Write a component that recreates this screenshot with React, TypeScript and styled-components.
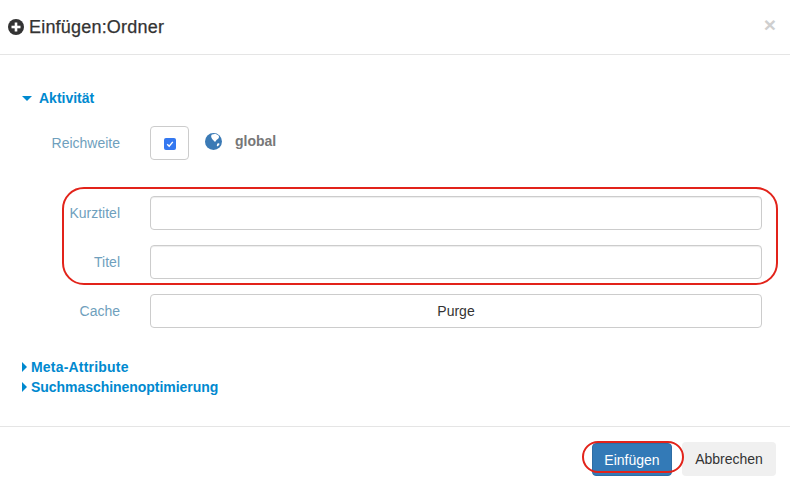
import React from "react";
import styled, { createGlobalStyle } from "styled-components";

const Global = createGlobalStyle`
  html, body { margin: 0; padding: 0; background: #fff; }
  body { font-family: "Liberation Sans", Arial, sans-serif; font-size: 14px; color: #333; overflow: hidden; }
`;

const Modal = styled.div`
  position: relative;
  width: 790px;
  height: 487px;
  background: #fff;
  display: flex;
  flex-direction: column;
  overflow: hidden;
`;

const Header = styled.header`
  height: 54px;
  flex: none;
  border-bottom: 1px solid #e5e5e5;
  display: flex;
  align-items: center;
  padding: 0 14px 0 8px;
`;

const HeaderIcon = styled.svg`
  width: 16px;
  height: 16px;
  margin-right: 5px;
  flex: none;
`;

const Title = styled.h4`
  margin: 0;
  flex: 1;
  font-size: 18px;
  font-weight: 400;
  line-height: 20px;
  letter-spacing: 0.2px;
  color: #333;
  -webkit-text-stroke: 0.25px #333;
`;

const Close = styled.span`
  font-size: 21px;
  font-weight: 700;
  line-height: 1;
  color: #cfcfcf;
  margin-top: -6px;
`;

const Body = styled.div`
  flex: 1;
  padding: 34px 28px 0 22px;
  display: flex;
  flex-direction: column;
`;

const Section = styled.div<{ $gap?: number; $spacing?: number }>`
  display: flex;
  align-items: center;
  height: 18px;
  color: #0089cf;
  font-size: 14px;
  font-weight: 700;
  letter-spacing: ${(p) => p.$spacing ?? 0}px;
  margin-top: ${(p) => p.$gap ?? 0}px;
`;

const Caret = styled.span<{ $open?: boolean }>`
  width: 0;
  height: 0;
  flex: none;
  ${(p) =>
    p.$open
      ? `border-left: 5px solid transparent; border-right: 5px solid transparent; border-top: 5px solid #0089cf; margin-right: 7px;`
      : `border-top: 5px solid transparent; border-bottom: 5px solid transparent; border-left: 5px solid #0089cf; margin-right: 4px;`}
`;

const Row = styled.div<{ $top?: number }>`
  display: grid;
  grid-template-columns: 98px 612px;
  column-gap: 30px;
  align-items: center;
  margin-top: ${(p) => p.$top ?? 15}px;
  height: 34px;
`;

const Label = styled.label`
  text-align: right;
  font-size: 14px;
  color: #6f9fbd;
`;

const ScopeCell = styled.div`
  display: flex;
  align-items: flex-start;
  height: 34px;
`;

const CheckFrame = styled.div`
  width: 37px;
  height: 32px;
  border: 1px solid #ccc;
  border-radius: 4px;
  display: flex;
  align-items: center;
  justify-content: center;
  flex: none;
`;

const CheckBox = styled.span`
  width: 12px;
  height: 12px;
  border-radius: 2px;
  background: #3478f0;
  display: flex;
  align-items: center;
  justify-content: center;
  margin-top: 2px;
`;

const Globe = styled.svg`
  width: 17px;
  height: 17px;
  margin: 7px 0 0 16px;
  flex: none;
`;

const ScopeText = styled.span`
  font-size: 14px;
  font-weight: 700;
  color: #777;
  margin: 5px 0 0 13px;
  line-height: 20px;
`;

const Input = styled.input`
  box-sizing: border-box;
  width: 612px;
  height: 34px;
  border: 1px solid #ccc;
  border-radius: 4px;
  background: #fff;
  box-shadow: inset 0 1px 1px rgba(0, 0, 0, 0.075);
  padding: 6px 12px;
  outline: none;
`;

const Purge = styled.button`
  box-sizing: border-box;
  width: 612px;
  height: 34px;
  border: 1px solid #ccc;
  border-radius: 4px;
  background: #fff;
  color: #333;
  font: 400 14px "Liberation Sans", Arial, sans-serif;
`;

const Footer = styled.footer`
  height: 61px;
  flex: none;
  box-sizing: border-box;
  border-top: 1px solid #e5e5e5;
  display: flex;
  justify-content: flex-end;
  align-items: flex-start;
  padding: 15px 14px 0 0;
  gap: 10px;
`;

const Primary = styled.button`
  box-sizing: border-box;
  width: 80px;
  height: 33px;
  margin-top: 1px;
  border: 1px solid #2e6da4;
  border-radius: 4px;
  background: #337ab7;
  color: #fff;
  font: 400 14px "Liberation Sans", Arial, sans-serif;
`;

const Secondary = styled.button`
  box-sizing: border-box;
  width: 94px;
  height: 34px;
  border: 0;
  border-radius: 4px;
  background: #f0f0f0;
  color: #333;
  font: 400 14px "Liberation Sans", Arial, sans-serif;
`;

const FieldsMark = styled.div`
  position: absolute;
  left: 62px;
  top: 187px;
  width: 716px;
  height: 98px;
  box-sizing: border-box;
  border: 2px solid #e2231a;
  border-radius: 22px;
  pointer-events: none;
`;

const ButtonMark = styled.div`
  position: absolute;
  left: 582px;
  top: 441px;
  width: 102px;
  height: 32px;
  box-sizing: border-box;
  border: 2px solid #e2231a;
  border-radius: 16px;
  pointer-events: none;
`;

export default function App() {
  return (
    <Modal>
      <Global />
      <Header>
        <HeaderIcon viewBox="0 0 16 16">
          <circle cx="8" cy="8" r="8" fill="#333" />
          <rect x="3.5" y="6.7" width="9" height="2.6" fill="#fff" />
          <rect x="6.7" y="3.5" width="2.6" height="9" fill="#fff" />
        </HeaderIcon>
        <Title>Einfügen:Ordner</Title>
        <Close>×</Close>
      </Header>
      <Body>
        <Section>
          <Caret $open />
          Aktivität
        </Section>
        <Row $top={19}>
          <Label>Reichweite</Label>
          <ScopeCell>
            <CheckFrame>
              <CheckBox>
                <svg width="8" height="8" viewBox="0 0 8 8">
                  <path d="M1.2 4.2 3.2 6.2 6.8 1.9" fill="none" stroke="#fff" strokeWidth="1.4" />
                </svg>
              </CheckBox>
            </CheckFrame>
            <Globe viewBox="0 0 17 17">
              <circle cx="8.5" cy="8.5" r="8.5" fill="#3b7ab5" />
              <path d="M7 1.5c2-1 5-.8 6.5 1 1 1.300.5 3-1 3.800-1.200.7-1.500 2-2.500 2.700C8.500 7.500 6.800 6 6.300 4.300 6 3.200 6.200 2 7 1.500Z" fill="#fff" />
              <path d="M12.500 10.500c.8-.5 1.800-.3 2 .3.100.8-.8 2-1.800 2.500-.7.300-1-.5-.8-1.300.1-.6.200-1.200.6-1.500Z" fill="#fff" />
            </Globe>
            <ScopeText>global</ScopeText>
          </ScopeCell>
        </Row>
        <Row $top={36}>
          <Label>Kurztitel</Label>
          <Input />
        </Row>
        <Row>
          <Label>Titel</Label>
          <Input />
        </Row>
        <Row>
          <Label>Cache</Label>
          <Purge>Purge</Purge>
        </Row>
        <Section $gap={30} $spacing={0.2}>
          <Caret />
          Meta-Attribute
        </Section>
        <Section $gap={2} $spacing={-0.04}>
          <Caret />
          Suchmaschinenoptimierung
        </Section>
      </Body>
      <Footer>
        <Primary>Einfügen</Primary>
        <Secondary>Abbrechen</Secondary>
      </Footer>
      <FieldsMark />
      <ButtonMark />
    </Modal>
  );
}
